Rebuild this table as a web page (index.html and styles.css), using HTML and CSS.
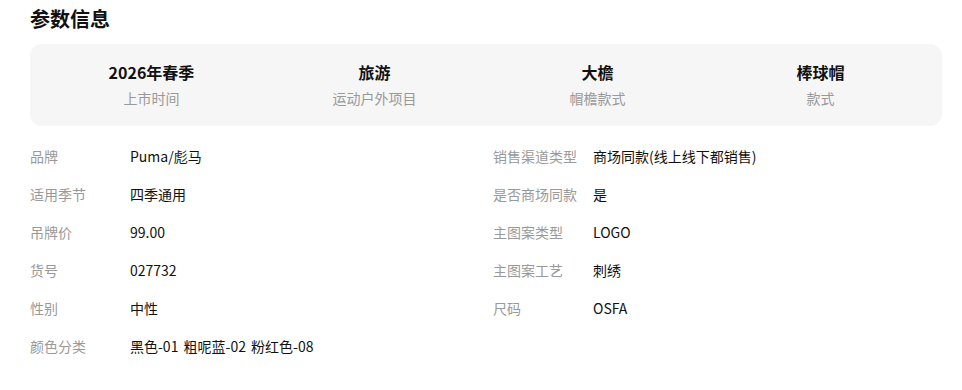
FILE: index.html
```html
<!DOCTYPE html>
<html lang="zh">
<head>
<meta charset="utf-8">
<link rel="stylesheet" href="styles.css">
</head>
<body>
<div class="page">
  <h2 class="title">参数信息</h2>
  <div class="summary">
    <div class="sum-item"><div class="sum-val">2026年春季</div><div class="sum-key">上市时间</div></div>
    <div class="sum-item"><div class="sum-val">旅游</div><div class="sum-key">运动户外项目</div></div>
    <div class="sum-item"><div class="sum-val">大檐</div><div class="sum-key">帽檐款式</div></div>
    <div class="sum-item"><div class="sum-val">棒球帽</div><div class="sum-key">款式</div></div>
  </div>
  <div class="params">
    <div class="row"><span class="k">品牌</span><span class="v">Puma/彪马</span></div>
    <div class="row"><span class="k">销售渠道类型</span><span class="v">商场同款(线上线下都销售)</span></div>
    <div class="row"><span class="k">适用季节</span><span class="v">四季通用</span></div>
    <div class="row"><span class="k">是否商场同款</span><span class="v">是</span></div>
    <div class="row"><span class="k">吊牌价</span><span class="v">99.00</span></div>
    <div class="row"><span class="k">主图案类型</span><span class="v">LOGO</span></div>
    <div class="row"><span class="k">货号</span><span class="v">027732</span></div>
    <div class="row"><span class="k">主图案工艺</span><span class="v">刺绣</span></div>
    <div class="row"><span class="k">性别</span><span class="v">中性</span></div>
    <div class="row"><span class="k">尺码</span><span class="v">OSFA</span></div>
    <div class="row"><span class="k">颜色分类</span><span class="v">黑色-01 粗呢蓝-02 粉红色-08</span></div>
  </div>
</div>
</body>
</html>
```
FILE: styles.css
```css
* { box-sizing: border-box; }
html, body { margin: 0; padding: 0; background: #fff; }
body {
  font-family: "Noto Sans CJK SC", "Noto Sans", sans-serif;
  color: #111;
}
.page { padding: 0 20px 0 30px; }
.title {
  margin: 0;
  height: 44px;
  padding-top: 5px;
  font-size: 20px;
  line-height: 28px;
  font-weight: 700;
  color: #111;
}
.summary {
  display: grid;
  grid-template-columns: repeat(4, 1fr);
  background: #f6f6f6;
  border-radius: 12px;
  padding: 16px 10px 0;
  height: 82px;
}
.sum-item { text-align: center; }
.sum-val {
  font-size: 16px;
  line-height: 24px;
  font-weight: 700;
  color: #111;
}
.sum-key {
  margin-top: 4px;
  font-size: 14px;
  line-height: 20px;
  color: #999;
}
.params {
  display: grid;
  grid-template-columns: 1fr 1fr;
  column-gap: 14px;
  padding-top: 11px;
}
.row {
  display: flex;
  height: 38px;
  align-items: center;
  font-size: 14px;
  line-height: 20px;
}
.k { width: 100px; flex: none; color: #999; }
.v { color: #111; word-spacing: 2px; }
```
